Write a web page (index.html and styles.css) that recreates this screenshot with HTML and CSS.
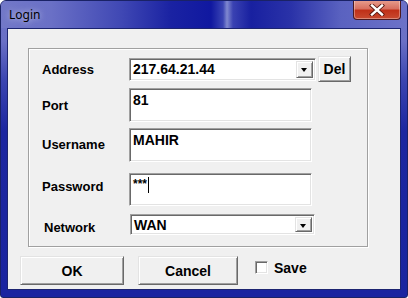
FILE: index.html
```html
<!DOCTYPE html>
<html>
<head>
<meta charset="utf-8">
<link rel="stylesheet" href="styles.css">
</head>
<body>
<div class="window">
  <div class="titlebar">
    <span class="title">Login</span>
    <div class="close"><svg width="16" height="12" viewBox="0 0 16 12"><path d="M3 1.5 L13 10.5 M13 1.5 L3 10.5" stroke="#5a1810" stroke-width="4.2" stroke-linecap="square"/><path d="M3 1.5 L13 10.5 M13 1.5 L3 10.5" stroke="#ffffff" stroke-width="2.4" stroke-linecap="square"/></svg></div>
  </div>
  <div class="client">
    <div class="group">
      <div class="row row-address">
        <span class="label">Address</span>
        <div class="combo combo-address"><span class="value">217.64.21.44</span><span class="arrow"></span></div>
        <div class="btn btn-del">Del</div>
      </div>
      <div class="row row-port">
        <span class="label">Port</span>
        <div class="field"><span class="value">81</span></div>
      </div>
      <div class="row row-user">
        <span class="label">Username</span>
        <div class="field"><span class="value">MAHIR</span></div>
      </div>
      <div class="row row-pass">
        <span class="label">Password</span>
        <div class="field field-pass"><span class="value">***</span><span class="caret"></span></div>
      </div>
      <div class="row row-net">
        <span class="label label-net">Network</span>
        <div class="combo combo-net"><span class="value">WAN</span><span class="arrow"></span></div>
      </div>
    </div>
    <div class="footer">
      <div class="btn btn-ok">OK</div>
      <div class="btn btn-cancel">Cancel</div>
      <label class="check"><span class="box"></span><span class="check-text">Save</span></label>
    </div>
  </div>
</div>
</body>
</html>
```
FILE: styles.css
```css
* { box-sizing: border-box; }
html, body { margin: 0; padding: 0; }
body { width: 408px; height: 298px; overflow: hidden; background: #fff; }

.window {
  width: 408px; height: 298px;
  border-radius: 6px 6px 3px 3px;
  border: 1px solid #1a2266;
  background: linear-gradient(to bottom, #6c72c8 0, #6a70c6 40px, #3a44b0 80px, #1c26a0 130px, #1a24a0 100%);
  display: flex; flex-direction: column;
  overflow: hidden;
}
.titlebar {
  height: 27px; flex: none;
  display: flex; align-items: flex-start;
  background: linear-gradient(to right, #7278c8 0, #6a70c6 50px, #4048b4 120px, #1a22a2 170px, #1018a0 210px, #3a44b4 222px, #8088d0 226px, #3a42b2 232px, #1820a0 250px, #2a32a8 290px, #5a62c0 340px, #6c72c8 100%);
}
.title {
  font-family: "Noto Sans", sans-serif; font-size: 12px; color: #000;
  margin: 6px 0 0 8px; line-height: 16px;
  text-shadow: 0 0 6px rgba(255,255,255,0.8);
}
.close {
  margin-left: auto; margin-right: 6px; margin-top: -1px;
  width: 48px; height: 20px;
  border: 1px solid #4a1a20; border-top: none;
  border-radius: 0 0 4px 4px;
  background: linear-gradient(to bottom, #e8a090 0, #d87060 45%, #c03018 55%, #c84a30 100%);
  display: flex; align-items: center; justify-content: center;
  box-shadow: inset 0 0 0 1px rgba(255,255,255,0.35);
}
.client {
  flex: 1;
  margin: 0 6px 7px 6px;
  background: #f0f0f0;
  border: 1px solid #1c2470;
  display: flex; flex-direction: column;
  font-family: "Liberation Sans", Arial, sans-serif;
  font-weight: bold; font-size: 13px; color: #000;
}
.group {
  margin: 19px 0 0 20px;
  width: 340px; height: 199px;
  border: 1px solid #a0a0a0;
  box-shadow: inset 1px 1px 0 #fff, 1px 1px 0 #fff;
  display: flex; flex-direction: column;
}
.row { display: flex; align-items: center; flex: none; }
.label { width: 100px; padding-left: 13px; flex: none; }
.label-net { padding-left: 15px; }
.row-address { margin-top: 7px; height: 26px; }
.row-port { margin-top: 6px; height: 34px; }
.row-user { margin-top: 6px; height: 34px; }
.row-pass { margin-top: 11px; height: 33px; }
.row-net { margin-top: 8px; height: 21px; }
.row-address .label { margin-top: 1px; }
.row-port .label { margin-top: 1px; }
.row-user .label { margin-top: -2px; }
.row-pass .label { margin-top: -7px; }
.row-net .label { margin-top: 6px; }

.value { font-size: 14px; }

.field, .combo {
  background: #fff;
  border-style: solid; border-width: 1px;
  border-color: #a0a0a0 #fff #fff #a0a0a0;
  box-shadow: inset 1px 1px 0 #696969, inset -1px -1px 0 #e3e3e3;
}
.field {
  width: 183px; height: 100%;
  padding: 3px 0 0 3px;
  display: flex; align-items: flex-start;
}
.caret { width: 1px; height: 16px; background: #000; margin-left: 1px; }
.field-pass .value { font-size: 12px; line-height: 14px; }
.combo {
  height: 23px;
  display: flex; align-items: center;
  padding: 2px 2px 2px 3px;
}
.combo-address { width: 187px; }
.combo-net { width: 185px; height: 21px; margin-left: 1px; }
.combo .value { flex: 1; }
.arrow {
  width: 17px; height: 100%;
  background: #f0f0f0;
  border-style: solid; border-width: 1px;
  border-color: #e3e3e3 #696969 #696969 #e3e3e3;
  box-shadow: inset 1px 1px 0 #fff, inset -1px -1px 0 #a0a0a0;
  position: relative;
}
.arrow::after {
  content: ""; position: absolute; left: 4px; top: 50%; margin-top: -1px;
  border-left: 3.5px solid transparent; border-right: 3.5px solid transparent;
  border-top: 4px solid #000;
}

.btn {
  background: #f0f0f0;
  border-style: solid; border-width: 1px;
  border-color: #e3e3e3 #696969 #696969 #e3e3e3;
  box-shadow: inset 1px 1px 0 #fff, inset -1px -1px 0 #a0a0a0;
  display: flex; align-items: center; justify-content: center;
  font-size: 14px;
}
.btn-del { width: 33px; height: 26px; margin-left: 2px; }

.footer {
  display: flex; align-items: flex-start;
  margin-top: 9px; padding-left: 12px;
}
.btn-ok { width: 104px; height: 29px; }
.btn-cancel { width: 100px; height: 29px; margin-left: 14px; }
.check { display: flex; align-items: center; margin: 5px 0 0 17px; height: 13px; }
.box {
  width: 13px; height: 13px; background: #fff;
  border-style: solid; border-width: 1px;
  border-color: #a0a0a0 #fff #fff #a0a0a0;
  box-shadow: inset 1px 1px 0 #696969, inset -1px -1px 0 #e3e3e3;
}
.check-text { margin-left: 6px; font-size: 14px; }
```
